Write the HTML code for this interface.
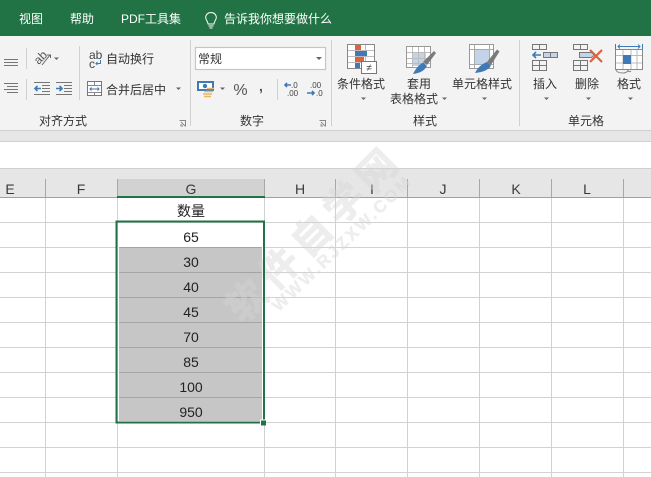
<!DOCTYPE html>
<html><head><meta charset="utf-8"><style>
html,body{margin:0;padding:0;background:#fff;overflow:hidden}
svg{display:block}
text{font-family:"Liberation Sans","Noto Sans CJK SC",sans-serif;fill:#333;font-size:12px}
.m{text-anchor:middle}
.t{fill:#fff}
.c{font-size:14px;text-anchor:middle;fill:#222}
.h{font-size:14px;text-anchor:middle;fill:#3a3a3a}
.g{stroke:#d2d2d2;stroke-width:1;fill:none}
.i{stroke:#767676;stroke-width:1;fill:none}
.b{stroke:#3f7ab5;stroke-width:1.6;fill:none}
.a{fill:#666}
.wm{fill:#d6d6d6;stroke:#d6d6d6;stroke-width:1;opacity:.42;font-weight:bold}
</style></head><body>
<svg width="651" height="477" viewBox="0 0 651 477" xmlns="http://www.w3.org/2000/svg">
<rect width="651" height="477" fill="#fff"/>
<!-- title -->
<rect width="651" height="36" fill="#217346"/>
<text class="t" x="19" y="23">视图</text>
<text class="t" x="70" y="23">帮助</text>
<text class="t" x="121" y="23">PDF工具集</text>
<path d="M211 12.500c-3.200 0-5.300 2.300-5.300 5 0 2.500 1.900 3.500 2.400 6.500h5.800c.5-3 2.400-4 2.400-6.500 0-2.700-2.100-5-5.300-5zM208.500 26h5M209.500 28h3" fill="none" stroke="#fff" stroke-width="1"/>
<text class="t" x="224" y="23">告诉我你想要做什么</text>
<!-- ribbon -->
<rect y="36" width="651" height="94" fill="#f3f3f3"/>
<rect y="130" width="651" height="12" fill="#e6e6e6"/>
<path d="M0 130.500H651M0 141.500H651M0 168.500H651" stroke="#cfcfcf"/>
<path d="M190.500 40V126M331.500 40V126M519.500 40V126M26.500 48V69M26.500 79V100M79.500 46V100M277.500 79V100" stroke="#d0d0d0"/>
<!-- alignment -->
<path class="i" d="M4 59.500H18M4 62.500H18M4 65.500H18M4 83.500H18M7 86.500H18M4 89.500H18M7 92.500H18"/>
<text x="34" y="62" transform="rotate(-45 40 58)" style="font-size:12px;fill:#555">ab</text>
<path d="M42 65L50 55M47 55H50.500V58" fill="none" stroke="#666"/>
<path class="a" d="M54 57.500h5l-2.500 2.500z"/>
<path class="i" d="M34 82.500H50M42 85.500H50M42 88.500H50M42 91.500H50M34 94.500H50M56 82.500H72M64 85.500H72M64 88.500H72M64 91.500H72M56 94.500H72"/>
<path class="b" d="M41 88.500H35M37.500 86L35 88.500L37.500 91M56 88.500H62M59.500 86L62 88.500L59.500 91"/>
<text x="89" y="59" style="font-size:12px;fill:#444">ab</text>
<text x="89" y="68" style="font-size:12px;fill:#444">c</text>
<path d="M100.500 60V63.500H96M97.500 62L96 63.500L97.500 65" stroke="#3f7ab5" fill="none"/>
<text x="106" y="63">自动换行</text>
<rect x="87.500" y="81.500" width="14" height="14" fill="#fff" stroke="#777"/>
<path d="M88 85.500H101M88 92.500H101M94.500 82V85M94.500 93V95" stroke="#888"/>
<path d="M90 89H99M91.500 87.500L90 89L91.500 90.500M97.500 87.500L99 89L97.500 90.500" stroke="#3f7ab5" fill="none"/>
<text x="106" y="94">合并后居中</text>
<path class="a" d="M176 87.500h5l-2.500 2.500z"/>
<text x="39" y="125">对齐方式</text>
<path d="M179.500 120.500h6v6M181 122l4 4M181 124v2h2" fill="none" stroke="#888"/>
<!-- number -->
<rect x="195.500" y="47.500" width="130" height="22" fill="#fff" stroke="#c6c6c6" stroke-width="1.200"/>
<text x="198" y="63">常规</text>
<path class="a" d="M316 57h6l-3 3z"/>
<rect x="198" y="82" width="15" height="8" fill="#fff" stroke="#3f7ab5" stroke-width="2"/>
<circle cx="205" cy="86" r="2.200" fill="#3f7ab5"/>
<path d="M207 88.500h7M204 91.500h9M203 94h9M204 96.500h7" stroke="#e8b566" stroke-width="1.500"/>
<path class="a" d="M220 87.500h5l-2.500 2.500z"/>
<text x="240.500" y="95" class="m" style="font-size:16px;fill:#555">%</text>
<text x="261" y="91" class="m" style="font-size:14px;font-weight:bold;fill:#555">,</text>
<text x="291" y="88" style="font-size:8px;fill:#444">.0</text>
<text x="287" y="96" style="font-size:8px;fill:#444">.00</text>
<path class="b" d="M291 85H285M287 83L285 85L287 87"/>
<text x="310" y="88" style="font-size:8px;fill:#444">.00</text>
<text x="316" y="96" style="font-size:8px;fill:#444">.0</text>
<path class="b" d="M307 93H314M312 91L314 93L312 95"/>
<text x="240" y="125">数字</text>
<path d="M319.500 120.500h6v6M321 122l4 4M321 124v2h2" fill="none" stroke="#888"/>
<!-- conditional -->
<rect x="347.500" y="44.500" width="27" height="24" fill="#fff" stroke="#888"/>
<path d="M356.500 45V68M365.500 45V68M348 50.500H374M348 56.500H374M348 62.500H374" stroke="#bbb"/>
<rect x="355" y="45" width="6" height="5" fill="#e0603c"/><rect x="355" y="51" width="12" height="5" fill="#3f7ab5"/><rect x="355" y="57" width="9" height="5" fill="#e0603c"/><rect x="355" y="63" width="5" height="5" fill="#3f7ab5"/>
<rect x="361.500" y="61.500" width="15" height="12" fill="#fff" stroke="#777"/>
<text x="369" y="71" class="m" style="font-size:10px;fill:#444">≠</text>
<text x="337" y="88">条件格式</text>
<path class="a" d="M361 97.500h5l-2.500 2.500z"/>
<!-- table styles -->
<rect x="406.500" y="46.500" width="24" height="21" fill="#fff" stroke="#999"/>
<rect x="412" y="52" width="14" height="14" fill="#c3d4e8"/>
<path d="M412.500 47V67M418.500 47V67M424.500 47V67M407 52.500H430M407 58.500H430M407 63.500H430" stroke="#bbb"/>
<path d="M423 62L434 51L436 53L427 65Z" fill="#7a7a7a"/>
<path d="M413 74C416 68 419 65 423 62.500L427 66C424 71 420 73 413 74Z" fill="#3f7ab5"/>
<text x="407" y="88">套用</text>
<text x="390" y="103">表格格式</text>
<path class="a" d="M442 97.500h5l-2.500 2.500z"/>
<!-- cell styles -->
<rect x="469.500" y="44.500" width="24" height="24" fill="#fff" stroke="#999"/>
<rect x="474" y="49" width="15" height="15" fill="#c3d4e8"/>
<path d="M474.500 45V68M489.500 45V68M470 49.500H493M470 64.500H493" stroke="#aaa"/>
<path d="M487 62L497 49.500L499.500 51.500L491 65Z" fill="#7a7a7a"/>
<path d="M475 73C478 67 482 64 487 62L491 65.500C488 70.500 483 72 475 73Z" fill="#3f7ab5"/>
<text x="452" y="88">单元格样式</text>
<path class="a" d="M482 97.500h5l-2.500 2.500z"/>
<text x="413" y="125">样式</text>
<!-- insert -->
<path class="i" d="M532.500 44.500h14v5h-14zM539.500 44.500v5M532.500 60.500h14v10h-14zM539.500 60.500v10M532.500 65.500h14"/>
<rect x="543.500" y="52.500" width="14" height="5" fill="#c3d4e8" stroke="#777"/><path d="M550.500 52.500v5" stroke="#777"/>
<path class="b" stroke-width="1.800" d="M541 55H533M536 52L533 55L536 58"/>
<text x="533" y="88">插入</text>
<path class="a" d="M544 97.500h5l-2.500 2.500z"/>
<!-- delete -->
<path class="i" d="M573.500 44.500h14v5h-14zM580.500 44.500v5M573.500 60.500h14v10h-14zM580.500 60.500v10M573.500 65.500h14"/>
<path d="M579.500 52.500h12l3 2.500-3 2.500h-12z" fill="#c3d4e8" stroke="#777"/>
<path d="M590 50L602 62M602 50L590 62" stroke="#e0603c" stroke-width="2.200" fill="none"/>
<text x="575" y="88">删除</text>
<path class="a" d="M586 97.500h5l-2.500 2.500z"/>
<!-- format -->
<path d="M615.500 44V49M642.500 44V49M618 46.500H640M620 44.500L618 46.500L620 48.500M638 44.500L640 46.500L638 48.500" fill="none" stroke="#3f7ab5"/>
<rect x="615.500" y="49.500" width="27" height="20" fill="#fff" stroke="#888"/>
<path d="M623 50V69M631 50V69M637 50V69M616 55.500H642M616 63H642" stroke="#bbb"/>
<rect x="623" y="55" width="8" height="9" fill="#3f7ab5"/>
<path d="M616 70c1 3 5 3 7 3s5-1 5-3c0 2 2 2 3 1" fill="none" stroke="#888"/>
<text x="617" y="88">格式</text>
<path class="a" d="M628 97.500h5l-2.500 2.500z"/>
<text x="568" y="125">单元格</text>
<!-- headers -->
<rect y="169" width="651" height="28" fill="#e6e6e6"/>
<rect x="117" y="179" width="147" height="17" fill="#d2d2d2"/>
<path d="M45.500 179V197M117.500 179V197M264.500 179V197M335.500 179V197M407.500 179V197M479.500 179V197M551.500 179V197M623.500 179V197" stroke="#a8a8a8"/>
<path d="M0 197.500H651" stroke="#a0a0a0"/>
<rect x="117" y="196" width="148" height="2" fill="#217346"/>
<text class="h" x="10" y="194">E</text><text class="h" x="81" y="194">F</text><text class="h" x="191" y="194">G</text><text class="h" x="300" y="194">H</text><text class="h" x="372" y="194">I</text><text class="h" x="443" y="194">J</text><text class="h" x="516" y="194">K</text><text class="h" x="587" y="194">L</text>
<!-- grid -->
<path class="g" d="M0 222.500H651M0 247.500H651M0 272.500H651M0 297.500H651M0 322.500H651M0 347.500H651M0 372.500H651M0 397.500H651M0 422.500H651M0 447.500H651M0 472.500H651M45.500 198V477M117.500 198V477M264.500 198V477M335.500 198V477M407.500 198V477M479.500 198V477M551.500 198V477M623.500 198V477"/>
<!-- selection -->
<rect x="118" y="223" width="145" height="199" fill="#fff"/>
<rect x="119" y="247" width="143" height="174" fill="#c6c6c6"/>
<path d="M119 247.500H262M119 272.500H262M119 297.500H262M119 322.500H262M119 347.500H262M119 372.500H262M119 397.500H262" stroke="#a4a4a4"/>
<!-- watermark -->
<text class="m wm" transform="translate(314 233) rotate(-45)" y="14" style="font-size:39px;letter-spacing:7px">软件自学网</text>
<text class="m wm" transform="translate(342 243) rotate(-44)" y="6" style="font-size:17px;letter-spacing:2.500px;stroke-width:.4">WWW.RJZXW.COM</text>
<rect x="116.500" y="221.500" width="147.500" height="201" fill="none" stroke="#217346" stroke-width="2"/>
<rect x="260" y="419.500" width="6" height="6" fill="#fff"/>
<rect x="261" y="420.500" width="5" height="5" fill="#217346"/>
<!-- cells -->
<text class="c" x="191" y="216">数量</text>
<text class="c" x="191" y="242">65</text>
<text class="c" x="191" y="267">30</text>
<text class="c" x="191" y="292">40</text>
<text class="c" x="191" y="317">45</text>
<text class="c" x="191" y="342">70</text>
<text class="c" x="191" y="367">85</text>
<text class="c" x="191" y="392">100</text>
<text class="c" x="191" y="417">950</text>
</svg>
</body></html>
